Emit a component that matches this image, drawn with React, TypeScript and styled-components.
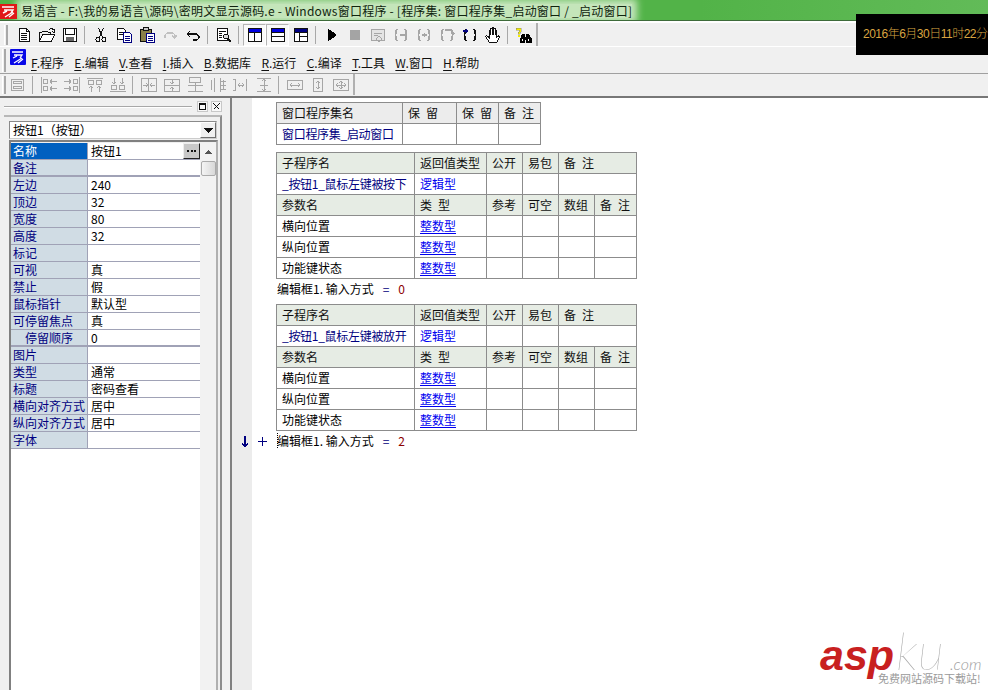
import React from 'react';
import styled, { createGlobalStyle } from 'styled-components';

const GlobalStyle = createGlobalStyle`
  html, body {
    margin: 0;
    padding: 0;
    background: #f0f0f0;
  }
  * {
    box-sizing: border-box;
  }
`;

const CJK = `"Noto Sans CJK SC", "Liberation Sans", sans-serif`;

const Window = styled.div`
  position: relative;
  width: 988px;
  height: 690px;
  overflow: hidden;
  display: flex;
  flex-direction: column;
  background: #f0f0f0;
  font-family: ${CJK};
  font-size: 12px;
  color: #000;
`;

const TitleBar = styled.div`
  height: 21px;
  flex: none;
  display: flex;
  align-items: center;
  gap: 4px;
  padding-top: 2px;
  background: linear-gradient(90deg, #52b348 0, #52b348 700px, #62bb58 100%);
  border-bottom: 1px solid #3e6b3a;
  overflow: hidden;
`;

const TitleText = styled.span`
  height: 14px;
  line-height: 14px;
  font-size: 12px;
  white-space: nowrap;
  color: #10240e;
  background: #c4e5ba;
  box-shadow: 0 0 7px 5px #c4e5ba;
  letter-spacing: 0.23px;
`;

const TitleLogo = styled.svg`
  width: 17px;
  height: 17px;
  flex: none;
  position: relative;
  z-index: 1;
`;

const BarRow = styled.div<{ $h: number; $line?: string }>`
  height: ${(p) => p.$h}px;
  flex: none;
  display: flex;
  align-items: center;
  border-bottom: 1px solid ${(p) => p.$line || '#ffffff'};
`;

const TopGap = styled.div`
  height: 2px;
  flex: none;
  background: #fff;
`;

const Grip = styled.div<{ $left: number }>`
  width: 4px;
  height: calc(100% - 3px);
  margin-left: ${(p) => p.$left}px;
  flex: none;
  border-left: 1px solid #fff;
  border-right: 2px solid #a8a8a8;
`;

const ToolStrip = styled.div<{ $pad: number }>`
  display: flex;
  align-items: center;
  height: 100%;
  padding-left: ${(p) => p.$pad}px;
  padding-right: 1px;
  border-right: 2px solid #b0b0b0;
`;

const ToolBtn = styled.div<{ $on?: boolean }>`
  width: 23px;
  height: 22px;
  flex: none;
  display: flex;
  align-items: center;
  justify-content: center;
  ${(p) =>
    p.$on &&
    `background: #f9f9f9;
     border: 1px solid #fff;
     border-top-color: #b4b4b4;
     border-left-color: #b4b4b4;`}
`;

const ToolSep = styled.div`
  width: 8px;
  height: 18px;
  flex: none;
  position: relative;
  &::after {
    content: '';
    position: absolute;
    left: 3px;
    top: 0;
    bottom: 0;
    width: 1px;
    background: #a8a8a8;
  }
`;

const Glyph = styled.svg<{ $w?: number; $h?: number }>`
  width: ${(p) => p.$w || 16}px;
  height: ${(p) => p.$h || 16}px;
  display: block;
  fill: none;
  shape-rendering: crispEdges;
`;

const MenuLogo = styled.svg`
  width: 16px;
  height: 16px;
  margin: -6px 5px 0 4px;
  flex: none;
`;

const MenuList = styled.div`
  display: flex;
  gap: 10.3px;
  padding-top: 5px;
  white-space: nowrap;
`;

const MenuItem = styled.span`
  color: #101010;
  line-height: 16px;
  u {
    text-underline-offset: 2px;
  }
`;

const Workspace = styled.div`
  flex: 1;
  min-height: 0;
  display: flex;
  border-top: 2px solid #777;
`;

const LeftPanel = styled.div`
  width: 230px;
  flex: none;
  display: flex;
  flex-direction: column;
  padding-left: 4px;
`;

const PanelHead = styled.div`
  height: 17px;
  flex: none;
  width: 218px;
  display: flex;
  align-items: center;
  gap: 3px;
`;

const PanelGrip = styled.div`
  flex: 1;
  height: 2px;
  margin-right: 2px;
  border-top: 1px solid #a8a8a8;
  border-bottom: 1px solid #fff;
`;

const PanelBtn = styled.div`
  width: 11px;
  height: 11px;
  display: flex;
  align-items: center;
  justify-content: center;
  background: #f8f8f8;
  border: 1px solid #c8c8c8;
`;

const PanelFrame = styled.div`
  flex: 1;
  min-height: 0;
  width: 218px;
  display: flex;
  flex-direction: column;
  gap: 1px;
  padding: 4px 4px 0 5px;
  border-top: 2px solid #b8b8b8;
  border-right: 2px solid #8c8c8c;
`;

const Combo = styled.div`
  height: 18px;
  flex: none;
  width: 208px;
  display: flex;
  align-items: center;
  justify-content: space-between;
  padding-left: 3px;
  background: #fff;
  border: 1px solid #8a8a8a;
  border-right-color: #ccc;
  border-bottom-color: #ccc;
  line-height: 16px;
`;

const ComboBtn = styled.div`
  width: 16px;
  height: 16px;
  display: flex;
  align-items: center;
  justify-content: center;
  background: #f0f0f0;
  border: 1px solid #fff;
  border-right-color: #707070;
  border-bottom-color: #707070;
`;

const PropGrid = styled.div`
  flex: 1;
  min-height: 0;
  width: 209px;
  display: flex;
  padding-top: 1px;
  border: 2px solid #808080;
  border-bottom: 0;
  border-right-color: #b0b0b0;
`;

const PropList = styled.div`
  width: 189px;
  flex: none;
  background: #fff;
`;

const PropRow = styled.div<{ $thick?: boolean }>`
  height: 17px;
  display: flex;
  border-bottom: ${(p) => (p.$thick ? '2px' : '1px')} solid #a0a2b6;
`;

const PropName = styled.div<{ $sel?: boolean; $indent?: boolean }>`
  width: 77px;
  flex: none;
  padding-left: ${(p) => (p.$indent ? 14 : 2)}px;
  border-right: 1px solid #a0a2b6;
  background: ${(p) => (p.$sel ? '#0060c0' : '#d0dce4')};
  color: ${(p) => (p.$sel ? '#ffffff' : '#000080')};
  line-height: 16px;
  white-space: nowrap;
  overflow: hidden;
`;

const PropValue = styled.div`
  flex: 1;
  display: flex;
  justify-content: space-between;
  padding-left: 3px;
  line-height: 16px;
  white-space: nowrap;
`;

const MoreBtn = styled.div`
  width: 17px;
  height: 16px;
  display: flex;
  align-items: center;
  justify-content: center;
  background: #c8c8c8;
  border-right: 1px solid #222;
  border-bottom: 1px solid #222;
  border-top: 1px solid #eee;
  border-left: 1px solid #eee;
`;

const ScrollBar = styled.div`
  flex: 1;
  display: flex;
  flex-direction: column;
  align-items: center;
  background: #f2f2f2;
`;

const ScrollArrow = styled.div`
  height: 18px;
  display: flex;
  align-items: center;
`;

const ScrollThumb = styled.div`
  width: 15px;
  height: 15px;
  background: linear-gradient(90deg, #f4f4f4, #d8d8d8);
  border: 1px solid #aaa;
  border-radius: 2px;
`;

const Editor = styled.div`
  flex: 1;
  display: flex;
  background: #fff;
  border-left: 2px solid #808080;
`;

const Gutter = styled.div`
  width: 20px;
  flex: none;
  background: #ececec;
`;

const Code = styled.div`
  flex: 1;
  padding: 4px 0 0 24px;
`;

const Table = styled.table<{ $w: number; $after: number }>`
  width: ${(p) => p.$w}px;
  margin-bottom: ${(p) => p.$after}px;
  table-layout: fixed;
  border-collapse: collapse;
  td {
    height: 21px;
    padding: 0 0 0 5px;
    border: 1px solid #8c8c8c;
    line-height: 18px;
    white-space: nowrap;
    overflow: hidden;
    word-spacing: 3.4px;
  }
`;

const HeadCell = styled.td<{ $bg?: string }>`
  background: ${(p) => p.$bg || '#e6ece4'};
  color: #101010;
`;

const NameCell = styled.td`
  color: #000080;
  letter-spacing: -0.3px;
`;

const TypeCell = styled.td<{ $link?: boolean }>`
  color: #0000f0;
  text-decoration: ${(p) => (p.$link ? 'underline' : 'none')};
  text-underline-offset: 2px;
`;

const Statement = styled.div<{ $after?: number }>`
  position: relative;
  height: 16px;
  margin: 2px 0 ${(p) => p.$after || 0}px 1px;
  display: flex;
  line-height: 16px;
  white-space: pre;
`;

const Op = styled.span`
  margin-left: 9px;
  color: #000080;
`;

const Val = styled.span`
  margin-left: 9px;
  color: #8c0000;
`;

const GutterMarks = styled.span`
  position: absolute;
  left: -37px;
  top: 0;
  display: flex;
  gap: 7px;
  align-items: center;
  height: 16px;
`;

const Caret = styled.span`
  position: absolute;
  left: 0;
  top: 0;
  height: 15px;
  border-left: 1px dotted #000;
`;

const Clock = styled.div`
  position: absolute;
  left: 856px;
  top: 14px;
  width: 132px;
  height: 41px;
  padding-left: 7px;
  background: #000;
  color: #d9a441;
  line-height: 40px;
  white-space: nowrap;
  overflow: hidden;
  font-family: "Liberation Sans", "Noto Sans CJK SC", sans-serif;
  font-weight: 300;
  letter-spacing: -0.5px;
`;

const Watermark = styled.div`
  position: absolute;
  left: 820px;
  top: 628px;
  width: 168px;
  height: 60px;
  font-family: "Liberation Sans", sans-serif;
`;

const BrandLine = styled.div`
  display: flex;
  align-items: baseline;
  height: 44px;
  line-height: 44px;
  font-style: italic;
`;

const BrandAsp = styled.span`
  font-size: 43px;
  font-weight: bold;
  color: #c8201f;
`;

const BrandKu = styled.span`
  font-family: Lato, sans-serif;
  font-size: 52px;
  font-weight: 100;
  color: #aaaaaa;
  margin-left: 2px;
`;

const BrandCom = styled.span`
  font-family: Lato, sans-serif;
  font-size: 16px;
  font-weight: 300;
  color: #a0a0a0;
  margin-left: 6px;
`;

const BrandNote = styled.div`
  margin: 0 0 0 58px;
  font-family: ${CJK};
  font-size: 11px;
  line-height: 13px;
  white-space: nowrap;
  color: #9a9a9a;
`;

const TitleIcon = () => (
  <TitleLogo viewBox="0 0 17 17">
    <rect x="0" y="1" width="17" height="15" fill="#e01818" />
    <path d="M2 4h12M4 7h9l-2 3M3 10l4-2M5 14l8-5M9 14l5-4" stroke="#fff" strokeWidth="1.4" fill="none" />
  </TitleLogo>
);

const s = '#111';
const g = '#a6a6a6';

const NewIcon = () => (
  <Glyph viewBox="0 0 16 16"><path d="M3.5 1.5h7l3 3v10h-10z" stroke={s} fill="#fff" /><path d="M10.5 1.5v3h3M5 6.5h6M5 8.5h6M5 10.5h6M5 12.5h6" stroke={s} /></Glyph>
);
const OpenIcon = () => (
  <Glyph viewBox="0 0 16 16"><path d="M.5 14.5v-9h2l1-1h5l1 1h2v2" stroke={s} /><path d="M.5 14.5l3-7h12l-3 7z" stroke={s} fill="#fff" /><path d="M10 2.5l2-1 3 1v3M13 4.5l2 1 1-2" stroke={s} /></Glyph>
);
const SaveIcon = () => (
  <Glyph viewBox="0 0 16 16"><path d="M1.5 1.5h13v13h-13z" stroke={s} fill="#fff" /><path d="M3.5 2v5.5h9V2" stroke={s} /><rect x="4" y="10" width="8" height="4" fill="#666" /></Glyph>
);
const CutIcon = () => (
  <Glyph viewBox="0 0 16 16"><path d="M5.5 1l4 9M10.5 1l-4 9" stroke={s} /><circle cx="5" cy="12.5" r="2" stroke={s} /><circle cx="11" cy="12.5" r="2" stroke={s} /></Glyph>
);
const CopyIcon = () => (
  <Glyph viewBox="0 0 16 16"><path d="M1.5 1.5h6l2 2v9h-8z" stroke={s} fill="#fff" /><path d="M3 5.5h4M3 7.5h4" stroke={s} /><path d="M7.5 5.5h6l2 2v8h-8z" stroke="#000080" fill="#fff" /><path d="M9 9.5h5M9 11.5h5M9 13.5h5" stroke="#000080" /></Glyph>
);
const PasteIcon = () => (
  <Glyph viewBox="0 0 16 16"><rect x="1.5" y="2.5" width="11" height="12" fill="#8a8048" stroke={s} /><rect x="4.5" y="0.5" width="5" height="3" fill="#c8c8c8" stroke={s} /><path d="M7.5 6.5h8v9h-8z" stroke="#000080" fill="#fff" /><path d="M9 9.5h5M9 11.5h5M9 13.5h5" stroke="#000080" /></Glyph>
);
const RedoIcon = () => (
  <Glyph viewBox="0 0 16 16"><path d="M3 11V8l2-2h6l2 2v3M13 11l-3-2M13 11l2-3" stroke="#c0c0c0" strokeWidth="1.4" /></Glyph>
);
const UndoIcon = () => (
  <Glyph viewBox="0 0 16 16"><path d="M2 7h9l3 2v2l-2 2H8M2 7l3-3M2 7l3 3" stroke={s} strokeWidth="1.4" /></Glyph>
);
const FindIcon = () => (
  <Glyph viewBox="0 0 16 16"><path d="M1.5 1.5h10v12h-10z" stroke={s} fill="#fff" /><path d="M3 4.5h7M3 6.5h3M3 8.5h3M3 10.5h3" stroke={s} /><circle cx="10" cy="9.5" r="2.5" stroke={s} fill="#ddd" /><path d="M12 12l3 3" stroke={s} strokeWidth="1.6" /></Glyph>
);
const LayoutIcon = ({ v }: { v: number }) => (
  <Glyph viewBox="0 0 16 16">
    <rect x="1.5" y="1.5" width="13" height="13" fill="#fff" stroke={s} />
    <rect x="2" y="2" width="12" height="3" fill={v === 3 ? '#000080' : '#0000e0'} />
    {v === 1 && <path d="M7.5 5v9M2 5.5h12" stroke={s} />}
    {v === 2 && <path d="M2 5.5h12M2 9.5h12" stroke={s} />}
    {v === 3 && <path d="M2 5.5h12M6.5 5v9M6.5 9.5h8" stroke={s} />}
  </Glyph>
);
const PlayIcon = () => (
  <Glyph viewBox="0 0 16 16"><path d="M4 1.5l9 6.5-9 6.5z" fill="#000" /></Glyph>
);
const StopIcon = () => (
  <Glyph viewBox="0 0 16 16"><rect x="3" y="3" width="10" height="10" fill="#a4a4a4" /></Glyph>
);
const BuildIcon = () => (
  <Glyph viewBox="0 0 16 16"><path d="M1.5 2.5h13v11h-13z" stroke={g} fill="#e4e4e4" /><path d="M1 2.5h14M4 6h8M4 8h4M6 12l3-3 3 3-3 3z" stroke={g} /></Glyph>
);
const BraceIcon = ({ mark, color = g }: { mark: string; color?: string }) => (
  <Glyph viewBox="0 0 16 16">
    <path d="M5 2.5H4L3 3.5v3l-1 1.5 1 1.5v3l1 1h1M11 2.5h1l1 1v3l1 1.5-1 1.5v3l-1 1h-1" stroke={color} strokeWidth="1.2" />
    <path d={mark} stroke={color === g ? g : '#000080'} strokeWidth="1.2" />
  </Glyph>
);
const HandIcon = () => (
  <Glyph viewBox="0 0 16 16"><path d="M4.5 15.5l-4-6 1-1 2.5 2V3.500h1.500v4V1.500H7v6V.5h1.500v7-6h1.500v6.500-4.500h1.500v7l2-1.500 1 1-3 6z" stroke={s} fill="#fff" /></Glyph>
);
const BinocIcon = () => (
  <Glyph viewBox="0 0 16 16">
    <path d="M0 1h5v4H4v2H2V5h1V3H0z" fill="#f4ec00" stroke="#777" strokeWidth=".4" />
    <rect x="2" y="8" width="2" height="2" fill="#f4ec00" />
    <path d="M6 7h3v9H4v-4zM10 7h3l3 5v4h-6z" fill="#000" />
    <rect x="9" y="10" width="1" height="3" fill="#000" />
    <rect x="6" y="12" width="1" height="2" fill="#fff" />
    <rect x="12" y="12" width="1" height="2" fill="#fff" />
  </Glyph>
);

const Dis = ({ d }: { d: string }) => (
  <Glyph $w={18} viewBox="0 0 18 16"><path d={d} stroke={g} /></Glyph>
);

const mainTools: (React.ReactNode | null | { on: React.ReactNode })[] = [
  <NewIcon />, <OpenIcon />, <SaveIcon />, null,
  <CutIcon />, <CopyIcon />, <PasteIcon />, <RedoIcon />, <UndoIcon />, null,
  <FindIcon />, null,
  { on: <LayoutIcon v={1} /> }, { on: <LayoutIcon v={2} /> }, <LayoutIcon v={3} />, null,
  <PlayIcon />, <StopIcon />, <BuildIcon />,
  <BraceIcon mark="M7 8h7M12 6l2 2-2 2" />,
  <BraceIcon mark="M6 8h5M8 6l2 2-2 2" />,
  <BraceIcon mark="M6 3h6l2 2v3M12 6l2 2 2-2" />,
  <BraceIcon mark="M1 4h5M4 2l2 2-2 2" color="#111" />,
  <HandIcon />, null,
  <BinocIcon />,
];

const alignTools = [
  'M2.500 2.500h12v11h-12zM4.500 4.500h8v2h-8zM4.500 9.500h8v2h-8z', null,
  'M1.500 0v16M3.500 2.500h4v4h-4zM3.500 9.500h4v4h-4zM10 4.500h7M10 4.500l2-2M10 4.500l2 2M10 11.500h7M10 11.500l2-2M10 11.500l2 2',
  'M16.500 0v16M10.500 2.500h4v4h-4zM10.500 9.500h4v4h-4zM1 4.500h7M8 4.500l-2-2M8 4.500l-2 2M1 11.500h7M8 11.500l-2-2M8 11.500l-2 2',
  'M1 1.500h16M2.500 3.500h5v4h-5zM10.500 3.500h5v4h-5zM5 15V9M5 9l-2 2M5 9l2 2M13 15V9M13 9l-2 2M13 9l2 2',
  'M1 14.500h16M2.500 8.500h5v4h-5zM10.500 8.500h5v4h-5zM5 1v6M5 7l-2-2M5 7l2-2M13 1v6M13 7l-2-2M13 7l2-2', null,
  'M1.500 1.500h15v13h-15zM8.500 2v12M3 8h4M6 6l2 2-2 2M15 8h-4M12 6l-2 2 2 2',
  'M1.500 2.500h15v12h-15zM1 8.500h16M9 3v4M7 5l2 2 2-2M9 14v-4M7 12l2-2 2 2',
  'M3.500 0.500h11v5h-11zM1.500 8.500h15M9 6v9M1.500 14.500h15',
  'M5.500 1v14M11.500 1v14M14.500 3v10M11.500 4h5M11.500 8h5M11.500 12h5M2 3v10',
  'M3.500 2v12M14.500 2v12M1 2.500h2M1 13.500h2M6 8h6M6 8l2-2M6 8l2 2M12 8l-2-2M12 8l-2 2',
  'M2 1.500h14M2 14.500h14M9 2v12M9 2l-2 2M9 2l2 2M9 14l-2-2M9 14l2-2M5 8h8', null,
  'M1.500 3.500h15v9h-15zM4 8h10M4 8l2-2M4 8l2 2M14 8l-2-2M14 8l-2 2',
  'M4.500 1.500h9v13h-9zM9 4v8M9 4l-2 2M9 4l2 2M9 12l-2-2M9 12l2-2',
  'M1.500 2.500h15v11h-15zM4 8h10M4 8l2-2M4 8l2 2M14 8l-2-2M14 8l-2 2M9 4v8M9 4l-2 2M9 4l2 2M9 12l-2-2M9 12l2-2',
];

const menus = ['F|.程序', 'E|.编辑', 'V|.查看', 'I|.插入', 'B|.数据库', 'R|.运行', 'C|.编译', 'T|.工具', 'W|.窗口', 'H|.帮助'];

const props: { n: string; v?: string; sel?: boolean; thick?: boolean; indent?: boolean }[] = [
  { n: '名称', v: '按钮1', sel: true },
  { n: '备注', thick: true },
  { n: '左边', v: '240' },
  { n: '顶边', v: '32' },
  { n: '宽度', v: '80' },
  { n: '高度', v: '32' },
  { n: '标记' },
  { n: '可视', v: '真' },
  { n: '禁止', v: '假' },
  { n: '鼠标指针', v: '默认型' },
  { n: '可停留焦点', v: '真' },
  { n: '停留顺序', v: '0', indent: true, thick: true },
  { n: '图片' },
  { n: '类型', v: '通常' },
  { n: '标题', v: '密码查看' },
  { n: '横向对齐方式', v: '居中' },
  { n: '纵向对齐方式', v: '居中' },
  { n: '字体' },
];

const params = ['横向位置', '纵向位置', '功能键状态'];

const SubTable = ({ name, after }: { name: string; after: number }) => (
  <Table $w={360} $after={after}>
    <colgroup>
      <col width={138} /><col width={72} /><col width={36} /><col width={36} /><col width={36} /><col width={42} />
    </colgroup>
    <tbody>
      <tr>
        <HeadCell>子程序名</HeadCell>
        <HeadCell>返回值类型</HeadCell>
        <HeadCell>公开</HeadCell>
        <HeadCell>易包</HeadCell>
        <HeadCell colSpan={2}>备 注</HeadCell>
      </tr>
      <tr>
        <NameCell>{name}</NameCell>
        <TypeCell>逻辑型</TypeCell>
        <td /><td /><td colSpan={2} />
      </tr>
      <tr>
        <HeadCell>参数名</HeadCell>
        <HeadCell>类 型</HeadCell>
        <HeadCell>参考</HeadCell>
        <HeadCell>可空</HeadCell>
        <HeadCell>数组</HeadCell>
        <HeadCell>备 注</HeadCell>
      </tr>
      {params.map((p) => (
        <tr key={p}>
          <td>{p}</td>
          <TypeCell $link>整数型</TypeCell>
          <td /><td /><td /><td />
        </tr>
      ))}
    </tbody>
  </Table>
);

export default function App() {
  return (
    <Window>
      <GlobalStyle />
      <TitleBar>
        <TitleIcon />
        <TitleText>易语言 - F:\我的易语言\源码\密明文显示源码.e - Windows窗口程序 - [程序集: 窗口程序集_启动窗口 / _启动窗口]</TitleText>
      </TitleBar>
      <TopGap />
      <BarRow $h={24}>
        <Grip $left={4} />
        <ToolStrip $pad={4}>
          {mainTools.map((t, i) => {
            if (t === null) return <ToolSep key={i} />;
            if (typeof t === 'object' && t !== null && 'on' in t) return <ToolBtn key={i} $on>{t.on}</ToolBtn>;
            return <ToolBtn key={i}>{t as React.ReactNode}</ToolBtn>;
          })}
        </ToolStrip>
      </BarRow>
      <BarRow $h={27} $line="#a0a0a0">
        <Grip $left={2} />
        <MenuLogo viewBox="0 0 16 16">
          <rect x="0" y="0" width="16" height="16" rx="1" fill="#0808e8" />
          <path d="M2 3h11M4 6h8l-2 3M3 9l4-2M4 14l8-5M8 14l5-4" stroke="#fff" strokeWidth="1.3" fill="none" />
        </MenuLogo>
        <MenuList>
          {menus.map((m) => {
            const [k, rest] = m.split('|');
            return <MenuItem key={m}><u>{k}</u>{rest}</MenuItem>;
          })}
        </MenuList>
      </BarRow>
      <BarRow $h={22} $line="#f0f0f0">
        <Grip $left={2} />
        <ToolStrip $pad={0}>
          {alignTools.map((d, i) =>
            d === null ? <ToolSep key={i} /> : <ToolBtn key={i}><Dis d={d} /></ToolBtn>
          )}
        </ToolStrip>
      </BarRow>
      <Workspace>
        <LeftPanel>
          <PanelHead>
            <PanelGrip />
            <PanelBtn>
              <Glyph $w={7} $h={7} viewBox="0 0 7 7"><path d="M.5 .5h6v6h-6zM0 1.500h7" stroke="#111" /></Glyph>
            </PanelBtn>
            <PanelBtn>
              <Glyph $w={7} $h={7} viewBox="0 0 7 7"><path d="M.5 .5l6 6M6.500 .5l-6 6" stroke="#111" strokeWidth="1.300" /></Glyph>
            </PanelBtn>
          </PanelHead>
          <PanelFrame>
            <Combo>
              按钮1（按钮）
              <ComboBtn>
                <Glyph $w={9} $h={5} viewBox="0 0 9 5"><path d="M0 0h9L4.500 5z" fill="#111" /></Glyph>
              </ComboBtn>
            </Combo>
            <PropGrid>
              <PropList>
                {props.map((p) => (
                  <PropRow key={p.n} $thick={p.thick}>
                    <PropName $sel={p.sel} $indent={p.indent}>{p.n}</PropName>
                    <PropValue>
                      {p.v}
                      {p.sel && (
                        <MoreBtn>
                          <Glyph $w={9} $h={2} viewBox="0 0 9 2"><path d="M0 0h2v2H0zM3.500 0h2v2h-2zM7 0h2v2H7z" fill="#111" /></Glyph>
                        </MoreBtn>
                      )}
                    </PropValue>
                  </PropRow>
                ))}
              </PropList>
              <ScrollBar>
                <ScrollArrow>
                  <Glyph $w={7} $h={4} viewBox="0 0 7 4"><path d="M3.500 0L7 4H0z" fill="#555" /></Glyph>
                </ScrollArrow>
                <ScrollThumb />
              </ScrollBar>
            </PropGrid>
          </PanelFrame>
        </LeftPanel>
        <Editor>
          <Gutter />
          <Code>
            <Table $w={264} $after={7}>
              <colgroup>
                <col width={126} /><col width={54} /><col width={42} /><col width={42} />
              </colgroup>
              <tbody>
                <tr>
                  <HeadCell $bg="#ececec">窗口程序集名</HeadCell>
                  <HeadCell $bg="#ececec">保 留</HeadCell>
                  <HeadCell $bg="#ececec">保 留</HeadCell>
                  <HeadCell $bg="#ececec">备 注</HeadCell>
                </tr>
                <tr>
                  <NameCell>窗口程序集_启动窗口</NameCell>
                  <td /><td /><td />
                </tr>
              </tbody>
            </Table>
            <SubTable name="_按钮1_鼠标左键被按下" after={0} />
            <Statement $after={7}>
              编辑框1. 输入方式<Op>=</Op><Val>0</Val>
            </Statement>
            <SubTable name="_按钮1_鼠标左键被放开" after={0} />
            <Statement>
              <GutterMarks>
                <Glyph $w={10} viewBox="0 0 10 16"><path d="M5 3v10M2 10l3 4 3-4" stroke="#000080" strokeWidth="1.400" /></Glyph>
                <Glyph $w={11} viewBox="0 0 11 16"><path d="M1 8h9M5.500 3.500v9" stroke="#000080" /></Glyph>
              </GutterMarks>
              <Caret />
              编辑框1. 输入方式<Op>=</Op><Val>2</Val>
            </Statement>
          </Code>
        </Editor>
      </Workspace>
      <Clock>2016年6月30日11时22分</Clock>
      <Watermark>
        <BrandLine>
          <BrandAsp>asp</BrandAsp>
          <BrandKu>ku</BrandKu>
          <BrandCom>.com</BrandCom>
        </BrandLine>
        <BrandNote>免费网站源码下载站!</BrandNote>
      </Watermark>
    </Window>
  );
}
